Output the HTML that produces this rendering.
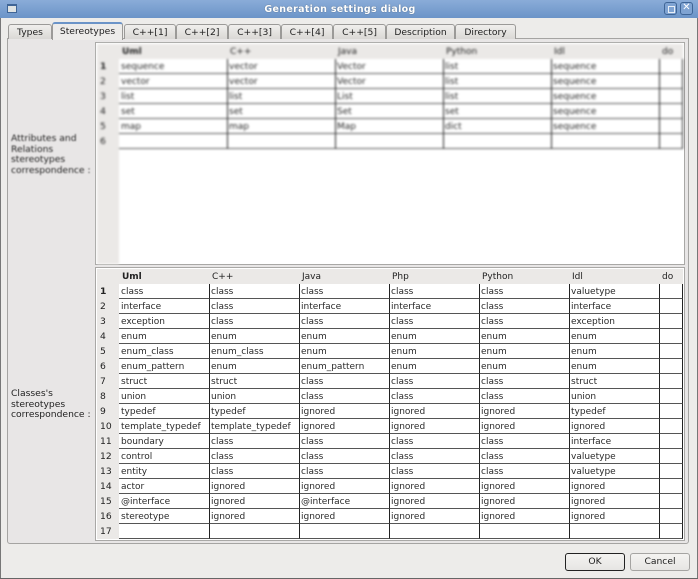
<!DOCTYPE html>
<html><head><meta charset="utf-8">
<style>
html,body{margin:0;padding:0}
body{width:698px;height:579px;overflow:hidden;position:relative;background:#edecea;font-family:"DejaVu Sans",sans-serif;font-size:9.2px;color:#222}
.a{position:absolute}
#tb{left:0;top:0;width:698px;height:18px;background:linear-gradient(#8aacd8,#6b94c8);border-top:0}
#title{left:0;top:2px;width:680px;text-align:center;color:#fff;font-weight:bold;font-size:9.5px;letter-spacing:.32px;line-height:15px;text-shadow:0 0 1px #456}
.wb{width:13px;height:13px;top:2px;border:1px solid #3f6596;border-radius:3px;box-sizing:border-box;background:#7fa3d2}
.tab{box-sizing:border-box;top:24px;height:15px;background:linear-gradient(#f0efed,#dad8d5);border:1px solid #9b9a98;border-bottom:none;border-radius:3px 3px 0 0;text-align:center;line-height:15px;color:#222}
#sel{top:22px;height:18px;background:#edecea;border-top:2px solid #6b94c8;line-height:15px;z-index:3}
#pane{left:7px;top:38px;width:682px;height:506px;box-sizing:border-box;border:1px solid #a5a4a2;border-radius:0 0 3px 3px;background:#e8e6e6}
.frame{box-sizing:border-box;background:#fff;border:1px solid #a9a8a6;left:95px;width:590px}
.rh{left:97px;width:22px;background:#ebe9e7}
.hd{background:#ebe9e7;left:97px;width:586px}
table{position:absolute;border-collapse:separate;border-spacing:0;table-layout:fixed;left:119px}
td{box-sizing:border-box;height:15px;padding:2px 0 0 1px;border-right:1px solid #222;border-bottom:1px solid #555;white-space:nowrap;overflow:hidden;line-height:12px;font-size:9px;color:#2a2a2a}
td:first-child{padding-left:2px}
.h{position:absolute;line-height:13px;font-size:9px;color:#222;white-space:nowrap;margin-top:1px}
.n{position:absolute;left:100px;line-height:14px;font-size:9.2px;color:#222;margin-top:1px}
.lab{position:absolute;left:11px;line-height:10.5px;font-size:9.2px;color:#222;white-space:nowrap;margin-top:1px}
.blur{filter:blur(1.05px)}
.btn{top:553px;height:18px;width:60px;box-sizing:border-box;border-radius:3px;text-align:center;line-height:16px;background:linear-gradient(#f4f3f1,#e6e5e3);border:1px solid #a5a4a2;color:#222}
</style></head><body>
<div class="a" id="tb"></div>
<div class="a" id="title">Generation settings dialog</div>
<div class="a" style="left:7px;top:4px;width:10px;height:9px;background:#dfe3e3;border:1px solid #3f6596;border-top-width:2px;box-sizing:border-box"></div>
<div class="a wb" style="left:664px"><div class="a" style="left:3px;top:3px;width:5px;height:5px;border:1px solid #e8eef6"></div></div>
<div class="a wb" style="left:680px;color:#fff;font-size:10px;line-height:10px;text-align:center">✕</div>
<div class="a" style="left:0;top:18px;width:1px;height:561px;background:#777"></div>
<div class="a" style="left:697px;top:18px;width:1px;height:561px;background:#777"></div>
<div class="a" style="left:0;top:578px;width:698px;height:1px;background:#666"></div>
<div class="a" id="pane"></div>
<div class="a tab" style="left:8px;width:44px">Types</div>
<div class="a tab" id="sel" style="left:52px;width:71px">Stereotypes</div>
<div class="a tab" style="left:124px;width:52px">C++[1]</div>
<div class="a tab" style="left:176px;width:52px">C++[2]</div>
<div class="a tab" style="left:228px;width:53px">C++[3]</div>
<div class="a tab" style="left:281px;width:52px">C++[4]</div>
<div class="a tab" style="left:333px;width:53px">C++[5]</div>
<div class="a tab" style="left:386px;width:69px">Description</div>
<div class="a tab" style="left:455px;width:61px">Directory</div>

<div class="lab" style="top:133px;filter:blur(.7px)">Attributes and<br>Relations<br>stereotypes<br>correspondence :</div>
<div class="lab" style="top:388px">Classes's<br>stereotypes<br>correspondence :</div>

<div class="a frame" style="top:42px;height:223px"></div>
<div class="a blur" style="left:0;top:0;width:698px;height:266px">
<div class="a rh" style="top:44px;height:220px"></div>
<div class="a hd" style="top:44px;height:15px"></div>
<span class="h" style="left:122px;top:45px;font-weight:bold">Uml</span>
<span class="h" style="left:230px;top:45px">C++</span>
<span class="h" style="left:338px;top:45px">Java</span>
<span class="h" style="left:446px;top:45px">Python</span>
<span class="h" style="left:554px;top:45px">Idl</span>
<span class="h" style="left:662px;top:45px">do</span>
<span class="n" style="top:59px;font-weight:bold">1</span><span class="n" style="top:74px">2</span><span class="n" style="top:89px">3</span><span class="n" style="top:104px">4</span><span class="n" style="top:119px">5</span><span class="n" style="top:134px">6</span>
<table style="top:59px;width:564px">
<colgroup><col style="width:109px"><col style="width:108px"><col style="width:108px"><col style="width:108px"><col style="width:108px"><col style="width:23px"></colgroup>
<tr><td>sequence</td><td>vector</td><td>Vector</td><td>list</td><td>sequence</td><td></td></tr>
<tr><td>vector</td><td>vector</td><td>Vector</td><td>list</td><td>sequence</td><td></td></tr>
<tr><td>list</td><td>list</td><td>List</td><td>list</td><td>sequence</td><td></td></tr>
<tr><td>set</td><td>set</td><td>Set</td><td>set</td><td>sequence</td><td></td></tr>
<tr><td>map</td><td>map</td><td>Map</td><td>dict</td><td>sequence</td><td></td></tr>
<tr><td></td><td></td><td></td><td></td><td></td><td></td></tr>
</table>
</div>

<div class="a frame" style="top:267px;height:274px"></div>
<div class="a rh" style="top:269px;height:270px"></div>
<div class="a hd" style="top:269px;height:15px"></div>
<span class="h" style="left:122px;top:270px;font-weight:bold">Uml</span>
<span class="h" style="left:212px;top:270px">C++</span>
<span class="h" style="left:302px;top:270px">Java</span>
<span class="h" style="left:392px;top:270px">Php</span>
<span class="h" style="left:482px;top:270px">Python</span>
<span class="h" style="left:572px;top:270px">Idl</span>
<span class="h" style="left:662px;top:270px">do</span>
<span class="n" style="top:284px;font-weight:bold">1</span><span class="n" style="top:299px">2</span><span class="n" style="top:314px">3</span><span class="n" style="top:329px">4</span><span class="n" style="top:344px">5</span><span class="n" style="top:359px">6</span><span class="n" style="top:374px">7</span><span class="n" style="top:389px">8</span><span class="n" style="top:404px">9</span><span class="n" style="top:419px">10</span><span class="n" style="top:434px">11</span><span class="n" style="top:449px">12</span><span class="n" style="top:464px">13</span><span class="n" style="top:479px">14</span><span class="n" style="top:494px">15</span><span class="n" style="top:509px">16</span><span class="n" style="top:524px">17</span>
<table style="top:284px;width:564px">
<colgroup><col style="width:91px"><col style="width:90px"><col style="width:90px"><col style="width:90px"><col style="width:90px"><col style="width:90px"><col style="width:23px"></colgroup>
<tr><td>class</td><td>class</td><td>class</td><td>class</td><td>class</td><td>valuetype</td><td></td></tr>
<tr><td>interface</td><td>class</td><td>interface</td><td>interface</td><td>class</td><td>interface</td><td></td></tr>
<tr><td>exception</td><td>class</td><td>class</td><td>class</td><td>class</td><td>exception</td><td></td></tr>
<tr><td>enum</td><td>enum</td><td>enum</td><td>enum</td><td>enum</td><td>enum</td><td></td></tr>
<tr><td>enum_class</td><td>enum_class</td><td>enum</td><td>enum</td><td>enum</td><td>enum</td><td></td></tr>
<tr><td>enum_pattern</td><td>enum</td><td>enum_pattern</td><td>enum</td><td>enum</td><td>enum</td><td></td></tr>
<tr><td>struct</td><td>struct</td><td>class</td><td>class</td><td>class</td><td>struct</td><td></td></tr>
<tr><td>union</td><td>union</td><td>class</td><td>class</td><td>class</td><td>union</td><td></td></tr>
<tr><td>typedef</td><td>typedef</td><td>ignored</td><td>ignored</td><td>ignored</td><td>typedef</td><td></td></tr>
<tr><td>template_typedef</td><td>template_typedef</td><td>ignored</td><td>ignored</td><td>ignored</td><td>ignored</td><td></td></tr>
<tr><td>boundary</td><td>class</td><td>class</td><td>class</td><td>class</td><td>interface</td><td></td></tr>
<tr><td>control</td><td>class</td><td>class</td><td>class</td><td>class</td><td>valuetype</td><td></td></tr>
<tr><td>entity</td><td>class</td><td>class</td><td>class</td><td>class</td><td>valuetype</td><td></td></tr>
<tr><td>actor</td><td>ignored</td><td>ignored</td><td>ignored</td><td>ignored</td><td>ignored</td><td></td></tr>
<tr><td>@interface</td><td>ignored</td><td>@interface</td><td>ignored</td><td>ignored</td><td>ignored</td><td></td></tr>
<tr><td>stereotype</td><td>ignored</td><td>ignored</td><td>ignored</td><td>ignored</td><td>ignored</td><td></td></tr>
<tr><td></td><td></td><td></td><td></td><td></td><td></td><td></td></tr>
</table>
<div class="a btn" style="left:565px;border-color:#222">OK</div>
<div class="a btn" style="left:630px">Cancel</div>
</body></html>
